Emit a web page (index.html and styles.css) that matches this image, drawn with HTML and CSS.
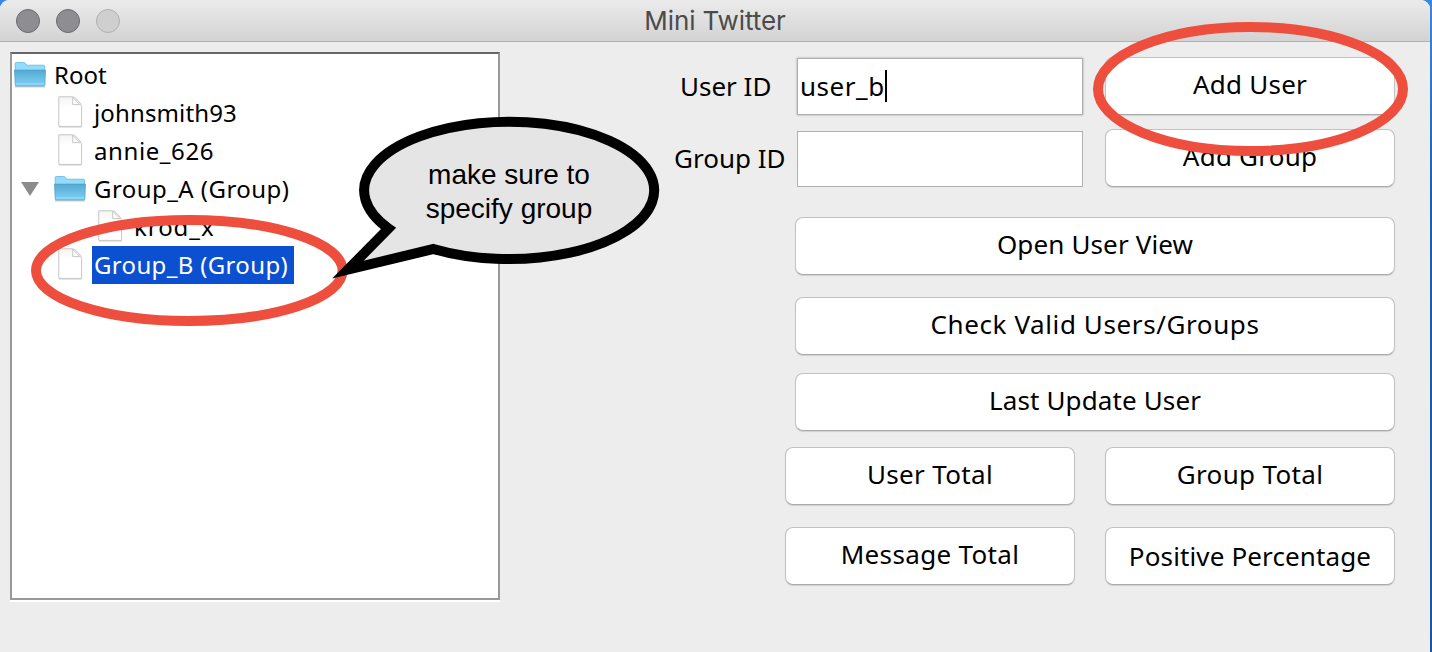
FILE: index.html
```html
<!DOCTYPE html>
<html lang="en">
<head>
<meta charset="utf-8">
<title>Mini Twitter</title>
<link rel="stylesheet" href="styles.css">
</head>
<body>
<svg class="defs" width="0" height="0">
  <defs>
    <linearGradient id="front" x1="0" y1="0" x2="0" y2="1">
      <stop offset="0" stop-color="#55aad2"/><stop offset="1" stop-color="#7fd0f5"/>
    </linearGradient>
    <linearGradient id="paper" x1="0" y1="0" x2="0" y2="1">
      <stop offset="0" stop-color="#f4f4f4"/><stop offset=".35" stop-color="#fff"/>
    </linearGradient>
    <symbol id="folder" viewBox="0 0 32 27">
      <path d="M1 24.7h30" stroke="#000" stroke-opacity=".18" stroke-width="1.5"/>
      <path d="M1.2 10V1.6Q1.2 .5 2.2 .5H9.8Q10.6 .5 11.2 1.2L13 3.2H29.6Q30.6 3.2 30.6 4.2V10Z" fill="#93dbfb" stroke="#69b5d8" stroke-width=".8"/>
      <path d="M.5 8.1H31.5L30.9 23Q30.8 24 30 24H2Q1.3 24 1.2 23Z" fill="url(#front)" stroke="#4c9fc5" stroke-width=".7"/>
      <path d="M1.8 21.9H30.2" stroke="#9cdef9" stroke-width="1"/>
    </symbol>
    <symbol id="page" viewBox="0 0 25 32">
      <path d="M1 31.2h23" stroke="#000" stroke-opacity=".15" stroke-width="1"/>
      <path d="M.8 .8H14Q16.8 1 18.5 3L22 7Q23.6 9 23.6 11.5V30.4H.8Z" fill="url(#paper)" stroke="#c6c6c6" stroke-width="1"/>
      <path d="M14.7 1.2V8.6H21.8Z" fill="#fdfdfd" stroke="#c2c2c2" stroke-width=".9"/>
    </symbol>
  </defs>
</svg>
<main class="window">
  <header class="titlebar">
    <div class="lights"><i class="light"></i><i class="light"></i><i class="light light-off"></i></div>
    <h1 class="title">Mini Twitter</h1>
  </header>
  <div class="content">
    <ul class="tree">
      <li class="row root"><svg class="folder"><use href="#folder"/></svg><span class="name">Root</span></li>
      <li class="row"><svg class="page"><use href="#page"/></svg><span class="name track-1">johnsmith93</span></li>
      <li class="row"><svg class="page"><use href="#page"/></svg><span class="name track-6">annie_626</span></li>
      <li class="row group"><i class="arrow"></i><svg class="folder"><use href="#folder"/></svg><span class="name track-4">Group_A (Group)</span></li>
      <li class="row nested"><svg class="page"><use href="#page"/></svg><span class="name track-9">krod_x</span></li>
      <li class="row"><svg class="page"><use href="#page"/></svg><span class="name selected track-3">Group_B (Group)</span></li>
    </ul>
    <section class="panel">
      <div class="form">
        <label class="label">User ID</label>
        <div class="field focused"><span class="track-5">user_b</span><i class="caret"></i></div>
        <button class="btn track-2">Add User</button>
        <label class="label label-group">Group ID</label>
        <div class="field field-group"></div>
        <button class="btn track-2">Add Group</button>
      </div>
      <div class="wide">
        <button class="btn track-1">Open User View</button>
        <button class="btn check track-6">Check Valid Users/Groups</button>
        <button class="btn track-1">Last Update User</button>
      </div>
      <div class="totals">
        <button class="btn track-3">User Total</button>
        <button class="btn track-3">Group Total</button>
        <button class="btn track-3">Message Total</button>
        <button class="btn positive track-1">Positive Percentage</button>
      </div>
    </section>
  </div>
</main>
<svg class="notes" viewBox="0 0 1432 652">
  <ellipse class="ring" cx="189.3" cy="270.5" rx="153.3" ry="50.5"/>
  <ellipse class="ring" cx="1250.5" cy="89" rx="152.5" ry="62"/>
  <path class="bubble" d="M388.5 228.5A145 68.7 0 1 1 433.5 249L348 269.5Z"/>
</svg>
<p class="bubble-text">make sure to<br>specify group</p>
</body>
</html>
```
FILE: styles.css
```css
* { box-sizing: border-box; }
body { margin: 0; width: 1432px; height: 652px; overflow: hidden; position: relative;
  background: linear-gradient(#3a87e0, #1c5fae 30%, #17569f); font-family: "Noto Sans", sans-serif; color: #000; }
.defs { position: absolute; }

/* window frame */
.window { width: 1430px; height: 652px; background: #ededed; border-radius: 9px 9px 0 0; overflow: hidden; }
.titlebar { height: 42px; display: grid; grid-template-columns: 1fr auto 1fr; align-items: center;
  background: linear-gradient(#ebebeb, #d3d3d3); border-bottom: 1px solid #b1b1b1; }
.lights { display: flex; gap: 16px; padding-left: 16px; }
.light { width: 24px; height: 24px; border-radius: 50%; background: #8e8d92; border: 1px solid #6b6a6f; }
.light-off { background: #cfcfcf; border-color: #b0b0b0; }
.title { margin: 0; font: 400 26px/40px Inter, sans-serif; letter-spacing: -.1px; color: #4b4b4b; }
.content { display: flex; align-items: flex-start; padding: 10px 35px 0 10px; }

/* user tree */
.tree { list-style: none; margin: 0; padding: 2px 0 0; width: 490px; height: 548px; background: #fff;
  border: 2px solid #999; border-top-color: #666; box-shadow: 0 2px #fff; font-size: 24px; }
.row { display: flex; align-items: center; height: 38px; padding-left: 46px; }
.root { padding-left: 2px; }
.group { padding-left: 9px; }
.nested { padding-left: 86px; }
.folder { width: 32px; height: 27px; flex: none; }
.page { width: 25px; height: 32px; flex: none; margin-top: -2px; }
.arrow { border: 9px solid transparent; border-top: 14px solid #8c8c8c; border-bottom: 0; margin-right: 15px; }
.name { line-height: 38px; white-space: nowrap; padding-left: 8px; }
.page + .name { padding-left: 11px; }
.page + .selected { background: #0a50d0; color: #fff; margin-left: 9px; padding-left: 2px; width: 202px; }

/* controls */
.panel { flex: 1; padding-top: 5px; font-size: 26px; }
.form { display: grid; grid-template-columns: 123px 308px 290px; row-gap: 14px; justify-content: end; }
.label { height: 58px; line-height: 58px; padding-left: 6px; white-space: nowrap; }
.label-group { padding-left: 0; }
.field { width: 286px; height: 57px; margin-top: 1px; padding: 0 0 2px 2px; background: #fff; border: 1px solid #b0b0b0; display: flex; align-items: center; }
.field-group { margin-top: 2px; height: 56px; }
.focused { box-shadow: 0 0 2px #999; }
.caret { width: 2px; height: 32px; background: #000; }
.btn { font: 26px "Noto Sans", sans-serif; color: #000; height: 58px; width: 100%; padding: 0 0 4px; background: #fff; border: 1px solid #c2c2c2;
  border-bottom-color: #a9a9a9; border-radius: 8px; box-shadow: 0 1px 1px rgba(0,0,0,.12); white-space: nowrap; }
.wide { width: 600px; margin: 30px 0 0 auto; display: grid; row-gap: 18px; }
.check { margin: 4px 0 0; }
.totals { width: 610px; margin: 16px 0 0 auto; display: grid; grid-template-columns: 290px 290px; gap: 22px 30px; }
.positive { padding-bottom: 0; }

/* letter spacing steps */
.track-1 { letter-spacing: .13px; }
.track-2 { letter-spacing: .22px; }
.track-3 { letter-spacing: .34px; }
.track-4 { letter-spacing: .45px; }
.track-5 { letter-spacing: .55px; }
.track-6 { letter-spacing: .6px; }
.track-9 { letter-spacing: .95px; }

/* annotations */
.notes { position: absolute; left: 0; top: 0; width: 1432px; height: 652px; }
.ring { fill: none; stroke: #ee4e3d; stroke-width: 10; }
.bubble { fill: #e5e5e5; stroke: #000; stroke-width: 10; stroke-linejoin: miter; stroke-miterlimit: 10; }
.bubble-text { position: absolute; left: 399px; top: 158px; width: 220px; margin: 0; text-align: center; font: 28px/34px "Liberation Sans", sans-serif; }
```
